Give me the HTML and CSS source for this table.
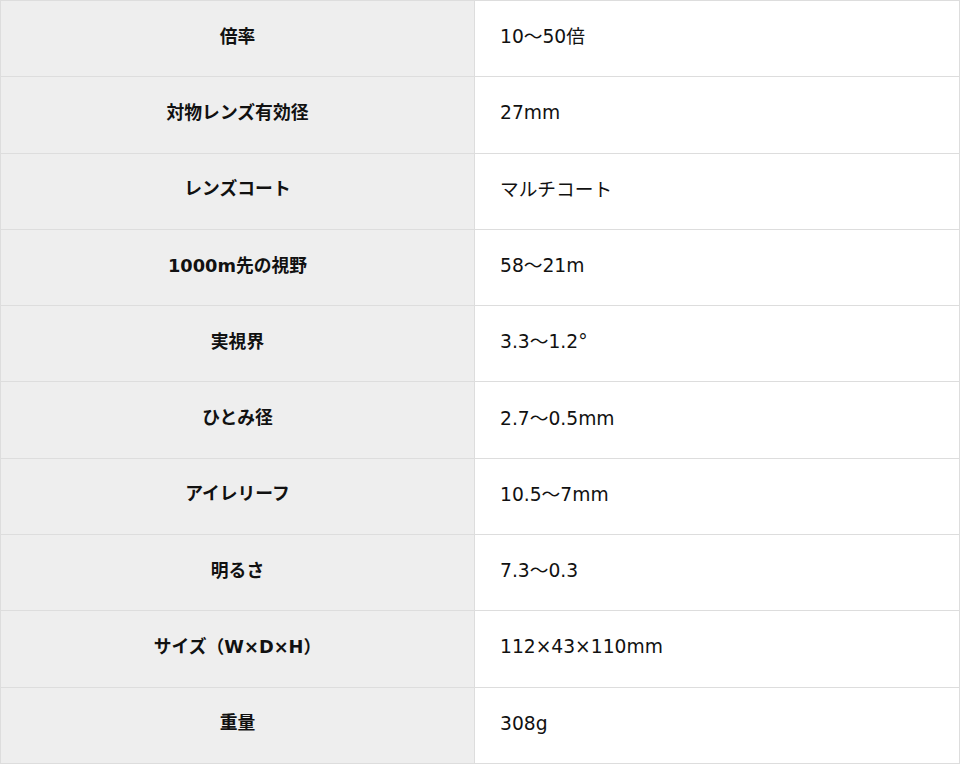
FILE: index.html
```html
<!DOCTYPE html>
<html lang="ja">
<head>
<meta charset="utf-8">
<link rel="stylesheet" href="styles.css">
</head>
<body>
<table class="spec">
  <tbody>
    <tr><th>倍率</th><td>10～50倍</td></tr>
    <tr><th>対物レンズ有効径</th><td>27mm</td></tr>
    <tr><th>レンズコート</th><td>マルチコート</td></tr>
    <tr><th>1000m先の視野</th><td>58～21m</td></tr>
    <tr><th>実視界</th><td>3.3～1.2°</td></tr>
    <tr><th>ひとみ径</th><td>2.7～0.5mm</td></tr>
    <tr><th>アイレリーフ</th><td>10.5～7mm</td></tr>
    <tr><th>明るさ</th><td>7.3～0.3</td></tr>
    <tr><th>サイズ（W×D×H）</th><td>112×43×110mm</td></tr>
    <tr><th>重量</th><td>308g</td></tr>
  </tbody>
</table>
</body>
</html>
```
FILE: styles.css
```css
html, body {
  margin: 0;
  padding: 0;
  background: #ffffff;
}
.spec {
  border-collapse: collapse;
  width: 960px;
  table-layout: fixed;
  font-family: "DejaVu Sans", "Noto Sans CJK JP", sans-serif;
  color: #111;
}
.spec th, .spec td {
  border: 1px solid #dddddd;
  height: 76.3px;
  box-sizing: border-box;
  padding: 0 0 3px 0;
  line-height: 1.4;
  vertical-align: middle;
}
.spec th {
  width: 474px;
  background: #eeeeee;
  font-weight: bold;
  font-size: 17.8px;
  text-align: center;
}
.spec td {
  background: #ffffff;
  font-size: 18.7px;
  padding-left: 25px;
  text-align: left;
}
```
